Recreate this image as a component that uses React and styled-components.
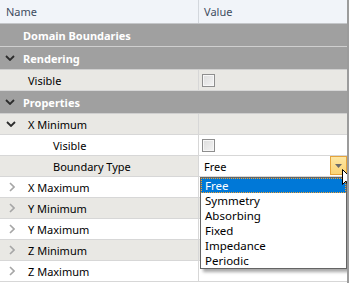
import React from 'react';
import styled, { createGlobalStyle } from 'styled-components';

const GlobalStyle = createGlobalStyle`
  body {
    margin: 0;
    background: #ffffff;
    font-family: "Noto Sans", "Open Sans", sans-serif;
  }
`;

const Grid = styled.div`
  position: relative;
  width: 347px;
  height: 283px;
  overflow: hidden;
  border-right: 2px solid #9c9c9c;
  font-size: 11px;
  line-height: 15px;
  background: #ffffff;
`;

const Header = styled.div`
  display: flex;
  height: 23px;
  background: #f1f4f9;
  border-bottom: 1px solid #c4c6c9;
  color: #3e4c5e;
`;

const HeaderCell = styled.div`
  display: flex;
  align-items: center;
  width: ${(p) => (p.$first ? '199px' : 'auto')};
  flex: ${(p) => (p.$first ? 'none' : '1')};
  padding-left: ${(p) => (p.$first ? '6px' : '5px')};
  box-sizing: border-box;
  border-right: ${(p) => (p.$first ? '1px solid #d3d7dd' : 'none')};
`;

const Row = styled.div`
  display: flex;
  height: ${(p) => (p.$group ? '22px' : '20px')};
  background: ${(p) => (p.$group ? '#a0a0a0' : p.$shade ? '#e9e8e4' : '#ffffff')};
  border-bottom: 1px solid ${(p) => (p.$group ? '#cfcfcf' : '#d7d7d7')};
  color: ${(p) => (p.$group ? '#ffffff' : '#000000')};
  font-weight: ${(p) => (p.$group ? 700 : 400)};
`;

const NameCell = styled.div`
  position: relative;
  display: flex;
  align-items: center;
  width: 199px;
  flex: none;
  box-sizing: border-box;
  padding-left: ${(p) => p.$indent}px;
  border-right: 1px solid ${(p) => (p.$group ? 'transparent' : '#d7d7d7')};
  white-space: nowrap;
`;

const ValueCell = styled.div`
  flex: 1;
  display: flex;
  align-items: center;
  padding-left: 3px;
  position: relative;
`;

const Toggle = styled.svg`
  position: absolute;
  left: ${(p) => p.$left}px;
  top: 50%;
  transform: translateY(-50%);
`;

const CheckBox = styled.span`
  width: 11px;
  height: 11px;
  border: 1px solid #8e8e8e;
  background: linear-gradient(135deg, #dcdcdc, #f4f4f4);
  box-shadow: inset 0 0 0 1px #f7f7f7;
`;

const Combo = styled.div`
  position: absolute;
  inset: 0;
  display: flex;
  align-items: center;
  padding-left: 5px;
  background: #ffffff;
`;

const ComboButton = styled.div`
  position: absolute;
  right: 0;
  top: 0;
  bottom: 1px;
  width: 15px;
  border: 1px solid #e5a43c;
  background: linear-gradient(#fde7a4, #fbd474);
  display: flex;
  align-items: center;
  justify-content: center;
`;

const Popup = styled.div`
  position: absolute;
  left: 200px;
  top: 177px;
  width: 145px;
  border: 1px solid #646464;
  background: #ffffff;
  box-shadow: 3px 3px 3px rgba(0, 0, 0, 0.35);
`;

const Option = styled.div`
  height: 15px;
  line-height: 15px;
  font-size: 11.5px;
  padding-left: 4px;
  overflow: hidden;
  color: ${(p) => (p.$selected ? '#ffffff' : '#000000')};
  background: ${(p) => (p.$selected ? '#0078d7' : 'transparent')};
  outline: ${(p) => (p.$selected ? '1px dotted #f0a030' : 'none')};
  outline-offset: -1px;
`;

const Cursor = styled.svg`
  position: absolute;
  left: 342px;
  top: 169px;
`;

const Down = ({ left }) => (
  <Toggle $left={left} width="10" height="6" viewBox="0 0 10 6">
    <polyline points="1,1 5,5 9,1" fill="none" stroke="#2c2c2c" strokeWidth="1.8" />
  </Toggle>
);

const Right = () => (
  <Toggle $left={9} width="6" height="10" viewBox="0 0 6 10">
    <polyline points="1,1 5,5 1,9" fill="none" stroke="#a6a6a6" strokeWidth="1.6" />
  </Toggle>
);

const options = ['Free', 'Symmetry', 'Absorbing', 'Fixed', 'Impedance', 'Periodic'];

const collapsed = ['X Maximum', 'Y Minimum', 'Y Maximum', 'Z Minimum', 'Z Maximum'];

const App = () => (
  <>
    <GlobalStyle />
    <Grid>
      <Header>
        <HeaderCell $first>Name</HeaderCell>
        <HeaderCell>Value</HeaderCell>
      </Header>
      <Row $group>
        <NameCell $group $indent={23}>Domain Boundaries</NameCell>
      </Row>
      <Row $group>
        <NameCell $group $indent={23}><Down left={5} />Rendering</NameCell>
      </Row>
      <Row $shade>
        <NameCell $indent={28}>Visible</NameCell>
        <ValueCell><CheckBox /></ValueCell>
      </Row>
      <Row $group>
        <NameCell $group $indent={23}><Down left={5} />Properties</NameCell>
      </Row>
      <Row $shade>
        <NameCell $indent={28}><Down left={6} />X Minimum</NameCell>
        <ValueCell />
      </Row>
      <Row>
        <NameCell $indent={53}>Visible</NameCell>
        <ValueCell><CheckBox /></ValueCell>
      </Row>
      <Row $shade>
        <NameCell $indent={53}>Boundary Type</NameCell>
        <ValueCell>
          <Combo>
            Free
            <ComboButton>
              <svg width="7" height="4" viewBox="0 0 7 4">
                <polygon points="0,0 7,0 3.5,4" fill="#6b6b6b" />
              </svg>
            </ComboButton>
          </Combo>
        </ValueCell>
      </Row>
      {collapsed.map((name, i) => (
        <Row key={name} $shade={i % 2 === 1}>
          <NameCell $indent={28}><Right />{name}</NameCell>
          <ValueCell />
        </Row>
      ))}
      <Popup>
        {options.map((o, i) => (
          <Option key={o} $selected={i === 0}>{o}</Option>
        ))}
      </Popup>
      <Cursor width="12" height="19" viewBox="0 0 12 19">
        <path d="M0.5,0.5 L0.5,15.5 L4,12 L6.5,18 L8.5,17 L6,11 L11,11 Z" fill="#ffffff" stroke="#000000" strokeWidth="1" />
      </Cursor>
    </Grid>
  </>
);

export default App;
